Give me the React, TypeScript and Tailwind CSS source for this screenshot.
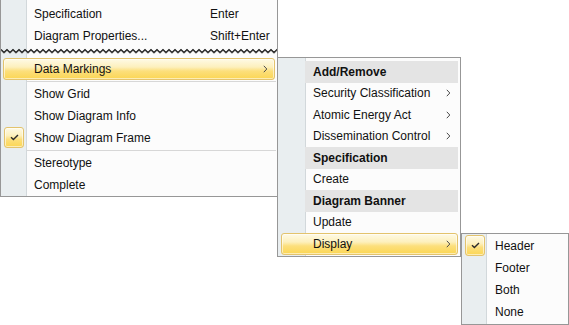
import React from "react";

const hlBg =
  "border border-[#e3c36c] rounded-[3px] bg-[linear-gradient(to_bottom,#fefae6_0%,#fdf0bd_40%,#fcdf7c_60%,#fbd654_100%)] shadow-[inset_0_0_0_1px_rgba(255,255,255,0.55)]";

function Chevron() {
  return (
    <svg width="5" height="8" viewBox="0 0 5 8" className="block">
      <polyline points="0.8,0.8 3.8,4 0.8,7.2" fill="none" stroke="#4a4a4a" strokeWidth="1" />
    </svg>
  );
}

function Check() {
  return (
    <div className={`flex items-center justify-center w-[20px] h-[21px] ${hlBg}`}>
      <svg width="9" height="7" viewBox="0 0 9 7" className="block">
        <polyline points="1,3.2 3.4,5.6 8,1" fill="none" stroke="#2b2b2b" strokeWidth="1.4" />
      </svg>
    </div>
  );
}

function Zigzag() {
  const a: string[] = [];
  const b: string[] = [];
  for (let i = 0; i <= 94; i++) {
    const y = i % 2 === 0 ? 1.5 : 4.5;
    a.push(`${i * 3},${y}`);
    b.push(`${i * 3},${y + 1}`);
  }
  return (
    <div className="h-[11px] w-full pt-[1px]">
      <svg width="276" height="8" viewBox="0 0 276 8" className="block">
        <polyline points={b.join(" ")} fill="none" stroke="#9a9a9a" strokeWidth="1" />
        <polyline points={a.join(" ")} fill="none" stroke="#111" strokeWidth="1.1" />
      </svg>
    </div>
  );
}

function MainRow({ label, shortcut, checked }: { label: string; shortcut?: string; checked?: boolean }) {
  return (
    <div className="relative flex items-center h-[22px] pl-[33px] shrink-0">
      {checked && (
        <div className="absolute left-[3px] top-0">
          <Check />
        </div>
      )}
      <span className="w-[176px] whitespace-nowrap">{label}</span>
      {shortcut && <span className="whitespace-nowrap">{shortcut}</span>}
    </div>
  );
}

function Sep({ left, h }: { left: string; h: string }) {
  return (
    <div className={`${h} flex items-center shrink-0`}>
      <div className={`${left} flex-1 h-[1px] bg-[#d7d7d7] mr-[1px]`} />
    </div>
  );
}

function SubRow({ label, sub }: { label: string; sub?: boolean }) {
  return (
    <div className="flex items-center h-[21.5px] pl-[35px] pr-[9px] shrink-0">
      <span className="flex-1 whitespace-nowrap">{label}</span>
      {sub && <Chevron />}
    </div>
  );
}

function SubHeader({ label }: { label: string }) {
  return (
    <div className="flex items-center h-[21.5px] ml-[27px] mr-[2px] pl-[8px] bg-[#e4e4e4] font-bold shrink-0">
      <span className="whitespace-nowrap">{label}</span>
    </div>
  );
}

export default function App() {
  return (
    <div className="relative w-[569px] h-[325px] bg-white overflow-hidden font-['Liberation_Sans',Arial,sans-serif] text-[12px] text-[#111] leading-none">
      {/* Main menu */}
      <div className="w-[278px] h-[197px] border-x border-b border-[#979797] bg-[linear-gradient(to_right,#e9eef0_25px,#d2d8db_25px,#d2d8db_26px,#fcfcfc_26px)] pt-[3px] flex flex-col">
        <MainRow label="Specification" shortcut="Enter" />
        <MainRow label="Diagram Properties..." shortcut="Shift+Enter" />
        <Zigzag />
        <div className={`flex items-center h-[22px] mx-[2px] pl-[30px] pr-[6px] shrink-0 ${hlBg}`}>
          <span className="flex-1 whitespace-nowrap">Data Markings</span>
          <Chevron />
        </div>
        <Sep left="ml-[26px]" h="h-[3px]" />
        <MainRow label="Show Grid" />
        <MainRow label="Show Diagram Info" />
        <MainRow label="Show Diagram Frame" checked />
        <Sep left="ml-[26px]" h="h-[3px]" />
        <MainRow label="Stereotype" />
        <MainRow label="Complete" />
      </div>

      {/* Data Markings submenu */}
      <div className="absolute left-[277px] top-[57px] w-[184px] h-[200px] border border-[#979797] bg-[linear-gradient(to_right,#e9eef0_27px,#d2d8db_27px,#d2d8db_28px,#fcfcfc_28px)] pt-[3px] flex flex-col">
        <SubHeader label="Add/Remove" />
        <SubRow label="Security Classification" sub />
        <SubRow label="Atomic Energy Act" sub />
        <SubRow label="Dissemination Control" sub />
        <SubHeader label="Specification" />
        <SubRow label="Create" />
        <SubHeader label="Diagram Banner" />
        <SubRow label="Update" />
        <div className={`flex items-center h-[21.5px] ml-[3px] mr-[2px] pl-[31px] pr-[6px] shrink-0 ${hlBg}`}>
          <span className="flex-1 whitespace-nowrap">Display</span>
          <Chevron />
        </div>
      </div>

      {/* Display submenu */}
      <div className="absolute left-[461px] top-[233px] w-[108px] h-[92px] border border-[#979797] bg-[linear-gradient(to_right,#e9eef0_24px,#d2d8db_24px,#d2d8db_25px,#fcfcfc_25px)] pt-[1px] flex flex-col">
        <MainRow label="Header" checked />
        <MainRow label="Footer" />
        <MainRow label="Both" />
        <MainRow label="None" />
      </div>
    </div>
  );
}
